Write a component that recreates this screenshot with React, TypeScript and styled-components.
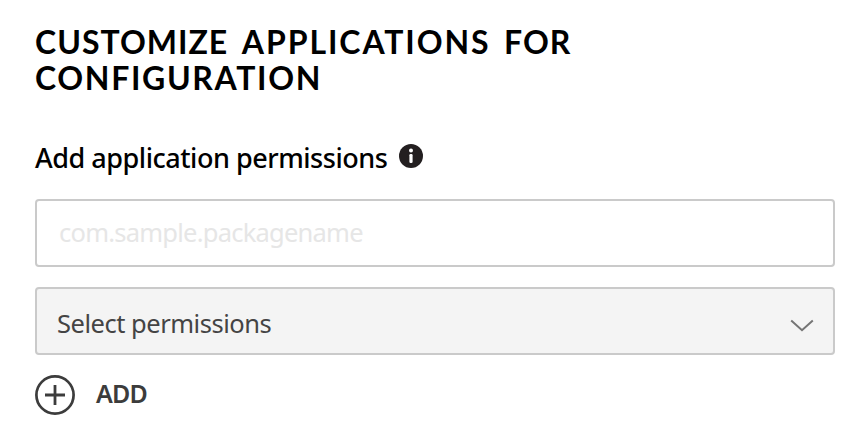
import React from "react";
import styled, { createGlobalStyle } from "styled-components";

const GlobalStyle = createGlobalStyle`
  *, *::before, *::after { box-sizing: border-box; }
  body { margin: 0; background: #fff; font-family: "Noto Sans", sans-serif; }
`;

const Panel = styled.main`
  display: flex;
  flex-direction: column;
  width: 866px;
  height: 438px;
  padding: 24px 31px 0 35px;
`;

const Heading = styled.h1`
  margin: 0;
  width: 600px;
  font: 700 32px/36px Lato, sans-serif;
  word-spacing: 5.8px;
  text-transform: uppercase;
  color: #000;
`;

const Word = styled.span<{ $tracking: number }>`
  letter-spacing: ${({ $tracking }) => $tracking}px;
`;

const LabelRow = styled.div`
  display: flex;
  align-items: center;
  justify-content: space-between;
  width: 388px;
  height: 36px;
  margin-top: 44px;
`;

const Label = styled.label`
  font-size: 27px;
  line-height: 36px;
  font-weight: 500;
  letter-spacing: -0.47px;
  white-space: nowrap;
  color: #000;
`;

const InfoIcon = styled.svg`
  display: block;
  flex: none;
  width: 24px;
  height: 24px;
  margin-bottom: 4px;
`;

const PackageInput = styled.input`
  width: 800px;
  height: 68px;
  margin: 23px 0 0;
  padding: 0 22px 2px;
  border: 2px solid #cacaca;
  border-radius: 4px;
  background: #fff;
  outline: none;
  font: 400 25.5px "Noto Sans", sans-serif;
  letter-spacing: -0.77px;
  color: #3c3c3c;
  &::placeholder { color: #e6e6e6; opacity: 1; }
`;

const Select = styled.button`
  display: flex;
  align-items: center;
  justify-content: space-between;
  width: 800px;
  height: 68px;
  margin: 20px 0 0;
  padding: 4px 19px 0 20px;
  border: 2px solid #cacaca;
  border-radius: 4px;
  background: #f4f4f4;
  font: 400 25.5px "Noto Sans", sans-serif;
  letter-spacing: -0.48px;
  color: #444;
`;

const Chevron = styled.svg`
  display: block;
  margin-top: 5px;
`;

const AddButton = styled.button`
  display: flex;
  align-items: center;
  align-self: flex-start;
  gap: 21px;
  height: 40px;
  margin: 20px 0 0;
  padding: 0;
  border: 0;
  background: none;
  font: 600 25px "Noto Sans", sans-serif;
  letter-spacing: -0.8px;
  color: #3c3c3c;
`;

const AddText = styled.span`
  padding-bottom: 4px;
`;

export default function App() {
  return (
    <>
      <GlobalStyle />
      <Panel>
        <Heading>
          <Word $tracking={1}>Customize</Word> <Word $tracking={1.9}>applications</Word>{" "}
          <Word $tracking={1}>for</Word> <Word $tracking={1.65}>configuration</Word>
        </Heading>
        <LabelRow>
          <Label htmlFor="package">Add application permissions</Label>
          <InfoIcon viewBox="0 0 24 24" aria-hidden="true">
            <circle cx="12" cy="12" r="12" fill="#231f20" />
            <circle cx="12" cy="6.4" r="2" fill="#fff" />
            <rect x="10.4" y="10" width="3.2" height="9" rx="1.2" fill="#fff" />
          </InfoIcon>
        </LabelRow>
        <PackageInput id="package" placeholder="com.sample.packagename" />
        <Select type="button">
          <span>Select permissions</span>
          <Chevron width="24" height="14" viewBox="0 0 24 14" fill="none" aria-hidden="true">
            <path d="M1.2 1.5 12 11.2 22.8 1.5" stroke="#757575" strokeWidth="2" />
          </Chevron>
        </Select>
        <AddButton type="button">
          <svg width="40" height="40" viewBox="0 0 40 40" fill="none" stroke="#3c3c3c" aria-hidden="true">
            <circle cx="20" cy="20" r="18.6" strokeWidth="2.7" />
            <path d="M10 20H30M20 10V30" strokeWidth="2.8" />
          </svg>
          <AddText>ADD</AddText>
        </AddButton>
      </Panel>
    </>
  );
}
